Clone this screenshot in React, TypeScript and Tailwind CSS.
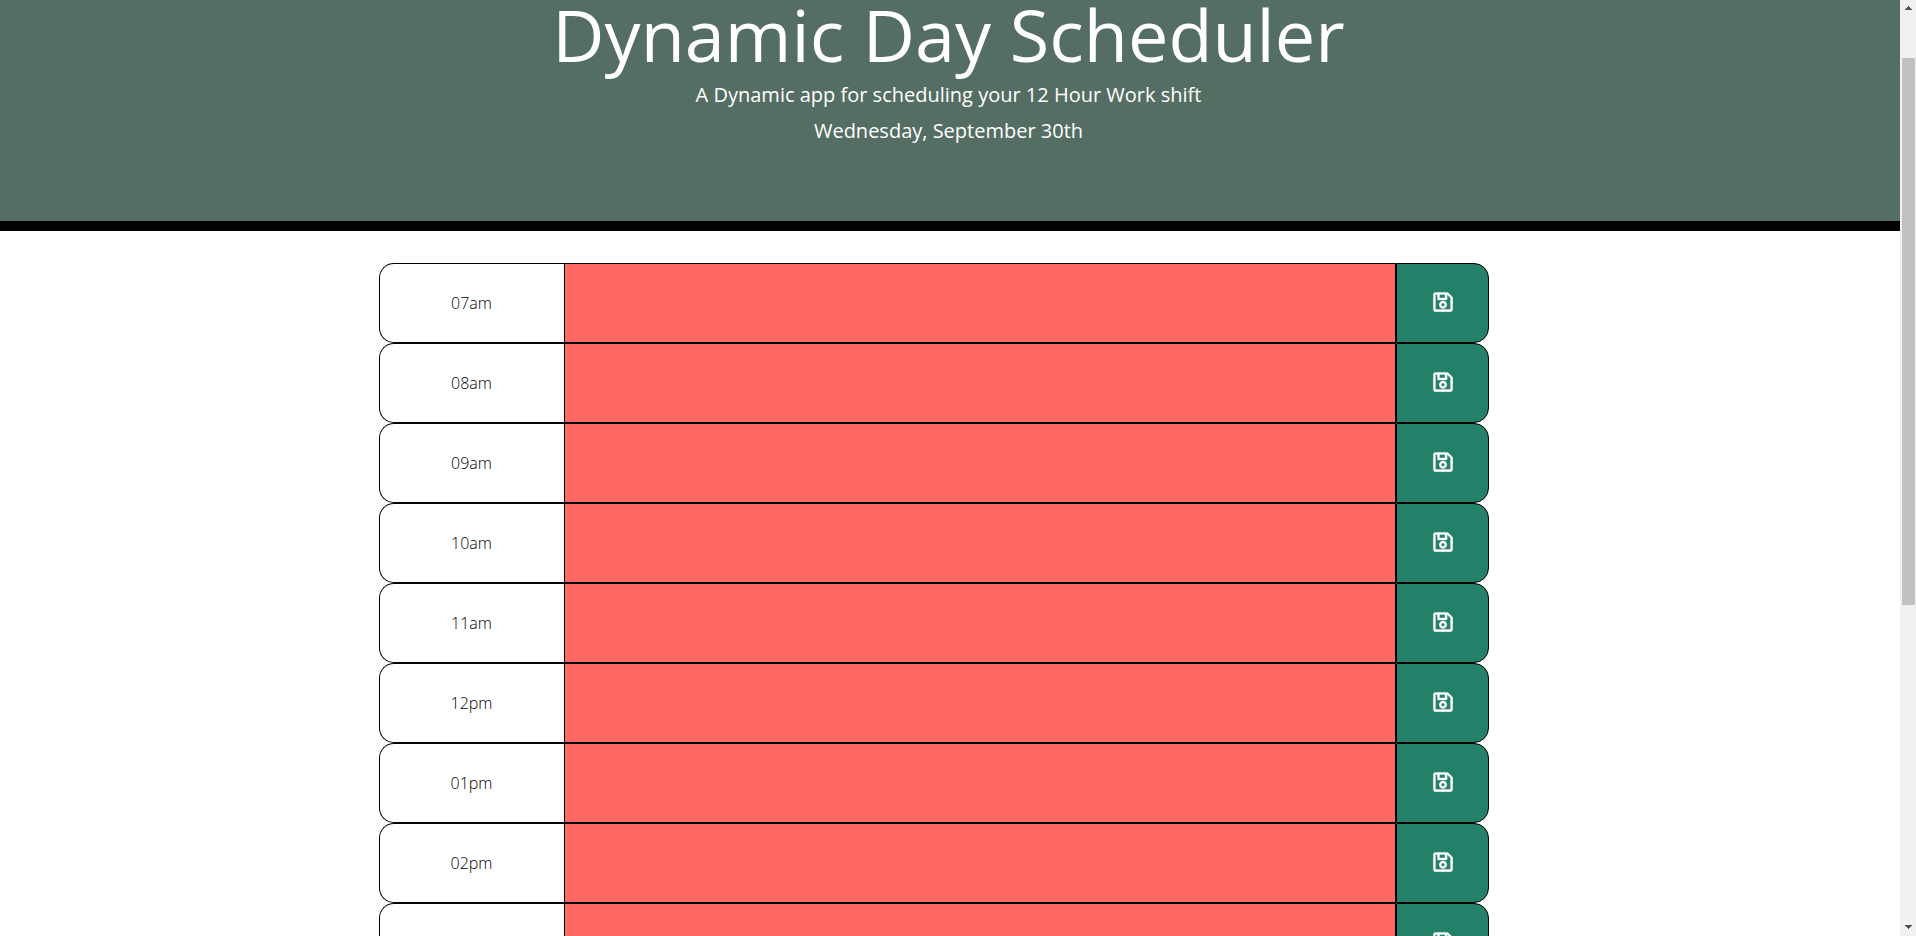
import { useState } from "react";
import { FaRegSave } from "react-icons/fa";

const HOURS = [
  "07am",
  "08am",
  "09am",
  "10am",
  "11am",
  "12pm",
  "01pm",
  "02pm",
  "03pm",
  "04pm",
  "05pm",
  "06pm",
];

function Header() {
  return (
    <header className="border-b-10 border-black bg-[#546e63] pr-[3px] pb-18 text-center text-white">
      <h1 className="text-[72px] leading-[68px]">Dynamic Day Scheduler</h1>
      <p className="mt-[9px] text-xl leading-9">A Dynamic app for scheduling your 12 Hour Work shift</p>
      <p className="text-xl leading-9">Wednesday, September 30th</p>
    </header>
  );
}

function TimeBlock({ hour }: { hour: string }) {
  const [text, setText] = useState("");
  const id = `hour-${hour}`;

  return (
    <div className="flex h-20">
      <label
        htmlFor={id}
        className="flex w-1/6 items-center justify-center rounded-l-[15px] border border-r-0 border-black pr-px text-base font-light text-black"
      >
        {hour}
      </label>
      <textarea
        id={id}
        value={text}
        onChange={(event) => setText(event.target.value)}
        className="block h-full min-w-0 flex-1 resize-none border border-black bg-[#ff6961] px-3 py-1 text-white outline-none"
      />
      <button
        type="button"
        aria-label={`Save ${hour}`}
        className="flex w-[93px] items-center justify-center rounded-r-[15px] border border-black bg-[#238169] pb-0.5 text-white"
      >
        <FaRegSave className="size-[22px] stroke-white stroke-[8]" aria-hidden="true" />
      </button>
    </div>
  );
}

function ScrollBar() {
  return (
    <div aria-hidden="true" className="flex w-4 shrink-0 flex-col items-center bg-[#f1f1f1]">
      <svg width="16" height="17" viewBox="0 0 16 17" fill="#505050">
        <path d="M8 6h1v1h1v1h1v1h1v1H5V9h1V8h1V7h1z" />
      </svg>
      <div className="w-full flex-[41]" />
      <div className="w-[13px] flex-[547] bg-[#c1c1c1]" />
      <div className="w-full flex-[314]" />
      <svg width="16" height="17" viewBox="0 0 16 17" fill="#505050">
        <path d="M5 6h7v1h-1v1h-1v1H9v1H8V9H7V8H6V7H5z" />
      </svg>
    </div>
  );
}

export default function App() {
  return (
    <div className="flex h-screen bg-white font-['Open_Sans','Noto_Sans',sans-serif]">
      <div className="min-w-0 flex-1 overflow-hidden">
        <Header />
        <main className="mx-auto max-w-[1142px] pt-8 pr-8">
          {HOURS.map((hour) => (
            <TimeBlock key={hour} hour={hour} />
          ))}
        </main>
      </div>
      <ScrollBar />
    </div>
  );
}
